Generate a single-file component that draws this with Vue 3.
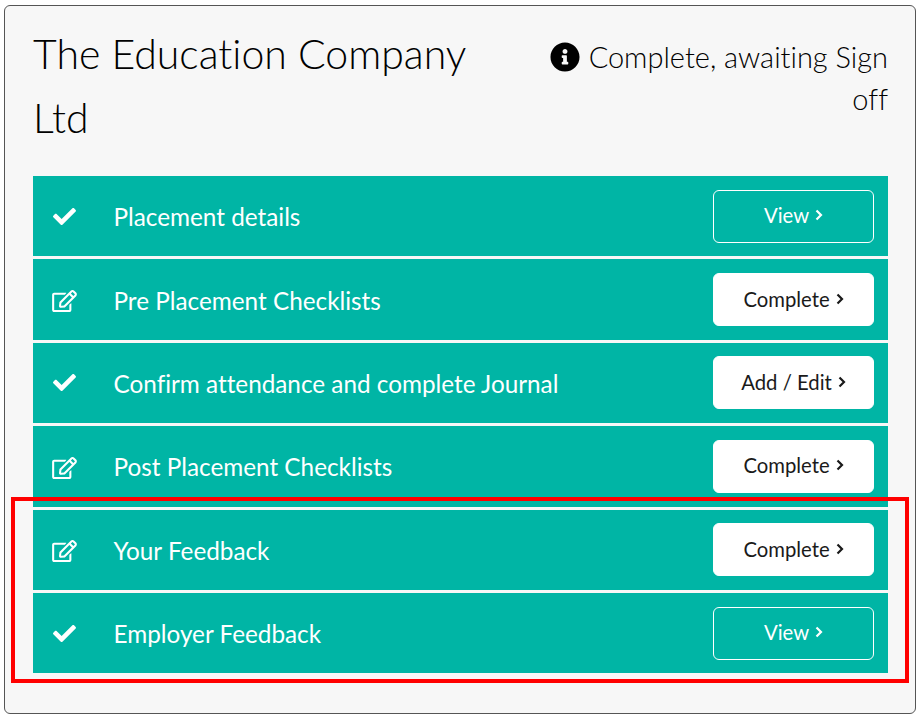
<script setup>
const rows = [
  { label: 'Placement details', icon: 'check', action: 'View', solid: false },
  { label: 'Pre Placement Checklists', icon: 'edit', action: 'Complete', solid: true },
  { label: 'Confirm attendance and complete Journal', icon: 'check', action: 'Add / Edit', solid: true },
  { label: 'Post Placement Checklists', icon: 'edit', action: 'Complete', solid: true },
  { label: 'Your Feedback', icon: 'edit', action: 'Complete', solid: true },
  { label: 'Employer Feedback', icon: 'check', action: 'View', solid: false }
]

const infoPath = 'M256 8C119.043 8 8 119.083 8 256c0 136.997 111.043 248 248 248s248-111.003 248-248C504 119.083 392.957 8 256 8zm0 110c23.196 0 42 18.804 42 42s-18.804 42-42 42-42-18.804-42-42 18.804-42 42-42zm56 254c0 6.627-5.373 12-12 12h-88c-6.627 0-12-5.373-12-12v-24c0-6.627 5.373-12 12-12h12v-64h-12c-6.627 0-12-5.373-12-12v-24c0-6.627 5.373-12 12-12h64c6.627 0 12 5.373 12 12v100h12c6.627 0 12 5.373 12 12v24z'

const icons = {
  check: {
    box: '0 0 512 512',
    d: 'M173.898 439.404l-166.400-166.400c-9.997-9.997-9.997-26.206 0-36.204l36.203-36.204c9.997-9.998 26.207-9.998 36.204 0L192 312.690 432.095 72.596c9.997-9.997 26.207-9.997 36.204 0l36.203 36.204c9.997 9.997 9.997 26.206 0 36.204l-294.400 294.401c-9.998 9.997-26.207 9.997-36.204-.001z'
  },
  edit: {
    box: '0 0 576 512',
    d: 'M402.300 344.900l32-32c5-5 13.700-1.500 13.700 5.700V464c0 26.500-21.500 48-48 48H48c-26.500 0-48-21.500-48-48V112c0-26.500 21.500-48 48-48h273.500c7.100 0 10.700 8.600 5.700 13.700l-32 32c-1.500 1.500-3.500 2.300-5.700 2.300H48v352h352V350.500c0-2.100.8-4.100 2.300-5.600zm156.600-201.800L296.300 405.700l-90.400 10c-26.200 2.900-48.500-19.200-45.600-45.600l10-90.400L432.900 17.100c22.900-22.900 59.900-22.900 82.700 0l43.200 43.200c22.900 22.900 22.900 60 .1 82.800zM460.100 174L402 115.900 216.200 301.800l-7.300 65.300 65.300-7.300L460.100 174zm64.800-79.700l-43.200-43.200c-4.100-4.100-10.800-4.100-14.800 0L436 82l58.100 58.100 30.900-30.900c4-4.200 4-10.800-.1-14.900z'
  }
}
</script>

<template>
  <div class="page">
    <div class="card">
      <div class="head">
        <h1>The Education Company Ltd</h1>
        <p class="status">
          <svg class="info" viewBox="0 0 512 512"><path :d="infoPath" /></svg>
          Complete, awaiting Sign off
        </p>
      </div>
      <div class="list">
        <div v-for="row in rows" :key="row.label" class="row">
          <span class="icon-cell">
            <svg class="icon" :class="row.icon" :viewBox="icons[row.icon].box"><path :d="icons[row.icon].d" /></svg>
          </span>
          <span class="label">{{ row.label }}</span>
          <a class="btn" :class="{ solid: row.solid }">
            {{ row.action }}
            <svg class="chev" viewBox="0 0 8 12"><path d="M1.500 1.500 6 6l-4.500 4.500" /></svg>
          </a>
        </div>
      </div>
    </div>
    <div class="highlight"></div>
  </div>
</template>

<style scoped>
.page {
  position: relative;
  width: 922px;
  height: 719px;
  padding: 5px 0 0 4px;
  box-sizing: border-box;
  font-family: Lato, "Open Sans", sans-serif;
  font-variant-ligatures: none;
  color: #000;
  background: #fff;
}

.card {
  width: 912px;
  height: 709px;
  box-sizing: border-box;
  padding: 16px 27px 0 28px;
  background: #f7f7f7;
  border: 1.5px solid #555;
  border-radius: 6px;
}

.head {
  display: flex;
  justify-content: space-between;
  height: 154px;
}

h1 {
  width: 470px;
  margin: 0;
  font-size: 41px;
  font-weight: 300;
  line-height: 64px;
}

.status {
  width: 345px;
  margin: 14px 0 0;
  font-size: 29px;
  font-weight: 300;
  line-height: 42px;
  text-align: right;
  letter-spacing: -0.01px;
}

.info {
  width: 30px;
  height: 30px;
  margin-right: 1px;
  vertical-align: -4px;
  fill: #000;
}

.list {
  display: flex;
  flex-direction: column;
  gap: 3px;
}

.row {
  display: flex;
  align-items: center;
  height: 80.4px;
  padding: 0 14px 0 19px;
  background: #00b5a5;
  color: #fff;
}

.icon-cell {
  flex: none;
  display: flex;
  width: 61.5px;
}

.icon {
  fill: #fff;
}

.icon.check {
  width: 23px;
  height: 23px;
  margin-left: 0.5px;
}

.icon.edit {
  width: 25px;
  height: 22px;
  margin-top: 3px;
}

.label {
  flex: 1;
  padding-top: 1px;
  font-size: 24.3px;
}

.btn {
  display: flex;
  align-items: center;
  justify-content: center;
  gap: 6px;
  width: 161px;
  height: 53px;
  padding-bottom: 2px;
  box-sizing: border-box;
  border: 1px solid #fff;
  border-radius: 6px;
  font-size: 20.3px;
}

.btn.solid {
  background: #fff;
  color: #1a1a1a;
}

.chev {
  width: 8px;
  height: 12px;
  fill: none;
  stroke: currentColor;
  stroke-width: 2.2;
}

.highlight {
  position: absolute;
  left: 11px;
  top: 497px;
  width: 898px;
  height: 186px;
  box-sizing: border-box;
  border: 4px solid #f00;
}
</style>
